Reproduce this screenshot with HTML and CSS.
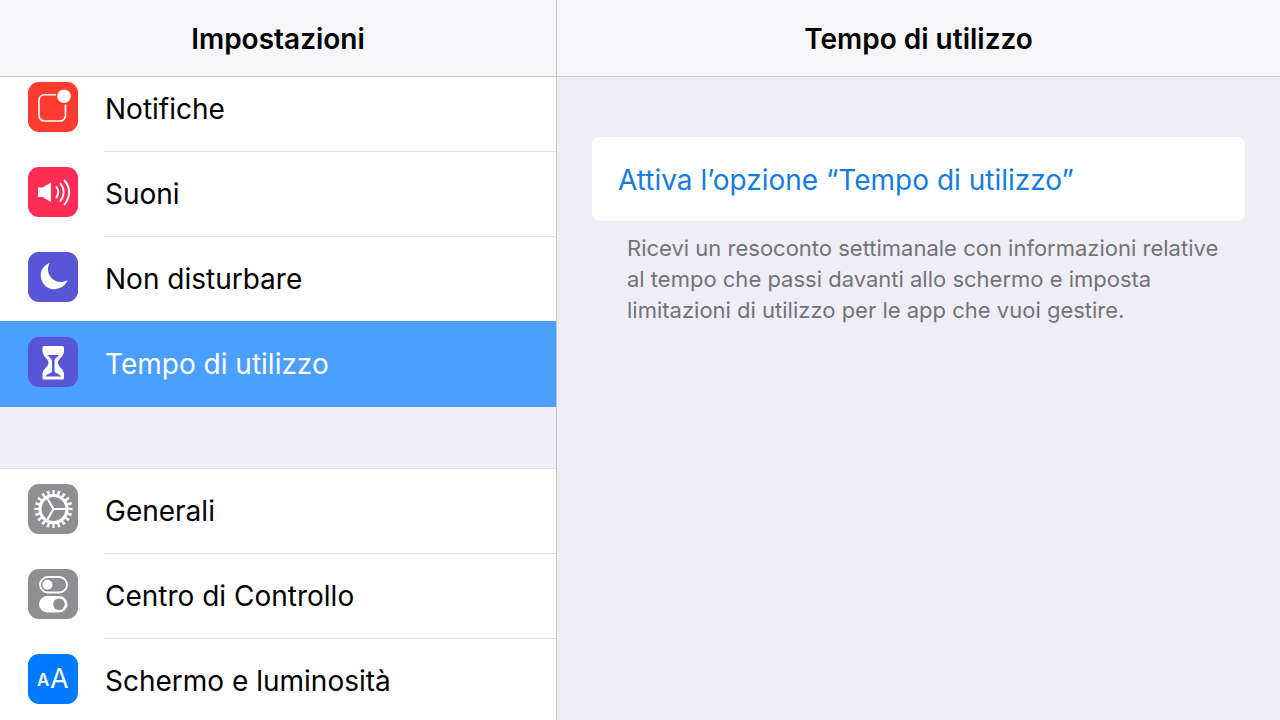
FILE: index.html
```html
<!DOCTYPE html>
<html lang="it">
<head>
<meta charset="utf-8">
<meta name="viewport" content="width=device-width, initial-scale=1">
<title>Impostazioni</title>
<link rel="stylesheet" href="styles.css">
</head>
<body>
<div class="app">
  <aside class="sidebar">
    <header class="bar"><h1 class="bar-title">Impostazioni</h1></header>
    <nav class="menu">
      <ul class="group group-scrolled">
        <li><a class="row" href="#notifiche">
          <svg class="icon red" viewBox="0 0 50 50" aria-hidden="true"><path d="M28 12.700H16.500a5.500 5.500 0 0 0-5.500 5.500V33.500a5.500 5.500 0 0 0 5.500 5.500H32a5.500 5.500 0 0 0 5.500-5.500V22.500" fill="none" stroke="#fff" stroke-width="1.600"/><circle cx="36" cy="14.200" r="6.800" fill="#fff"/></svg>
          <span class="label">Notifiche</span></a></li>
        <li><a class="row" href="#suoni">
          <svg class="icon pink" viewBox="0 0 50 50" aria-hidden="true"><path d="M10 20.500h4.500l8.500-5v19.500l-8.500-5H10z" fill="#fff"/><g fill="none" stroke="#fff" stroke-width="2" stroke-linecap="round"><path d="M28.500 20q3.600 5 0 10.500"/><path d="M32.500 16.500q6.400 8.500 0 17.500"/><path d="M36.500 13.500q9.500 11.500 0 24"/></g></svg>
          <span class="label">Suoni</span></a></li>
        <li><a class="row" href="#non-disturbare">
          <svg class="icon purple" viewBox="0 0 50 50" aria-hidden="true"><path d="M21.500 11C14.500 14 11.500 20 13.200 26.500C15 34.500 22 38.500 29 36.800C34.500 35.600 38 32.500 39.500 28C34 31.500 27.500 30.500 23.500 26C19.500 21.500 19 16.500 21.500 11z" fill="#fff"/></svg>
          <span class="label">Non disturbare</span></a></li>
        <li><a class="row selected" href="#tempo" aria-current="page">
          <svg class="icon purple" viewBox="0 0 50 50" aria-hidden="true"><path d="M16 9h18.500q1.500 0 1.500 1.500v3.500c0 6-6 7.500-6 11.700s6 6 6 11.800V41q0 1.500-1.500 1.500H16Q14.500 42.500 14.500 41v-3.500c0-5.800 6-7.600 6-11.800s-6-5.700-6-11.700v-3.500Q14.500 9 16 9z" fill="#fff"/><path d="M19.500 18H31c-1.500 2.500-4.500 3-4.500 6.500V34c0 2.500 5 2.500 6.500 5.500H17.500c1.500-3 6.500-3 6.500-5.500v-9.500c0-3.500-3-4-4.500-6.500z" fill="#5856d6"/></svg>
          <span class="label">Tempo di utilizzo</span></a></li>
      </ul>
      <ul class="group">
        <li><a class="row" href="#generali">
          <svg class="icon gray" viewBox="0 0 50 50" aria-hidden="true"><g fill="none" stroke="#fff"><circle cx="25.500" cy="25" r="13.500" stroke-width="3.200"/><circle cx="25.500" cy="25" r="16.800" stroke-width="4.500" pathLength="400" stroke-dasharray="9.200 10.800" stroke-dashoffset="4.600"/><path d="M25.500 25H39M25.500 25l-6.800-11.700M25.500 25l-6.800 11.700" stroke-width="2.200"/></g></svg>
          <span class="label">Generali</span></a></li>
        <li><a class="row" href="#centro-di-controllo">
          <svg class="icon gray" viewBox="0 0 50 50" aria-hidden="true"><rect x="12" y="8" width="27" height="15.500" rx="7.750" fill="none" stroke="#fff" stroke-width="1.800"/><circle cx="19.500" cy="15.750" r="5" fill="#fff"/><rect x="11" y="27" width="28.500" height="16.500" rx="8.250" fill="#fff"/><circle cx="31" cy="35.200" r="5.800" fill="#8e8e93"/></svg>
          <span class="label">Centro di Controllo</span></a></li>
        <li><a class="row" href="#schermo">
          <svg class="icon blue" viewBox="0 0 50 50" aria-hidden="true"><g fill="#fff"><text x="9" y="32" class="glyph-small">A</text><text x="22" y="34" class="glyph-large">A</text></g></svg>
          <span class="label">Schermo e luminosità</span></a></li>
      </ul>
    </nav>
  </aside>
  <main class="detail">
    <header class="bar"><h2 class="bar-title">Tempo di utilizzo</h2></header>
    <section class="content">
      <button class="action" type="button">Attiva l’opzione “Tempo di utilizzo”</button>
      <p class="note">Ricevi un resoconto settimanale con informazioni relative al tempo che passi davanti allo schermo e imposta limitazioni di utilizzo per le app che vuoi gestire.</p>
    </section>
  </main>
</div>
</body>
</html>
```

FILE: styles.css
```css
* { box-sizing: border-box; }
body {
  margin: 0;
  background: #efeef6;
  color: #000;
  font-family: Inter, "Liberation Sans", sans-serif;
}
.app {
  display: grid;
  grid-template-columns: 557fr 723fr;
  height: 100vh;
  overflow: hidden;
}
.sidebar {
  display: flex;
  flex-direction: column;
  min-width: 0;
  min-height: 0;
  border-right: 1px solid #c6c6ca;
}
.bar {
  display: flex;
  flex: none;
  align-items: center;
  justify-content: center;
  height: 77px;
  padding-top: 1px;
  background: #f6f6f9;
  border-bottom: 1px solid #cbcbcf;
}
.bar-title { margin: 0; font-size: 28px; line-height: 36px; font-weight: 600; }
.menu { flex: 1; min-height: 0; overflow: hidden; }
.group {
  margin: 0 0 61px;
  padding: 0;
  list-style: none;
  background: #fff;
  border-top: 1px solid #e0e0e4;
}
.group-scrolled { margin-top: -11px; }
.row {
  display: flex;
  align-items: flex-start;
  height: 85px;
  padding-left: 28px;
  color: inherit;
  text-decoration: none;
}
.icon { flex: none; width: 50px; height: 50px; margin: 15px 26px 0 0; border-radius: 11px; }
.label {
  display: flex;
  flex: 1;
  align-items: center;
  height: 85px;
  padding-left: 1px;
  font-size: 28px;
  line-height: 36px;
  border-bottom: 1px solid #e0e0e4;
  white-space: nowrap;
}
/* The highlight covers the separator of the row above. */
.selected {
  position: relative;
  height: 86px;
  margin-top: -1px;
  padding-top: 1px;
  background: #4a9fff;
  color: #fff;
}
.selected .label { border-bottom-color: transparent; }
.red { background: #ff3b30; }
.pink { background: #ff2d55; }
.purple { background: #5856d6; }
.gray { background: #8e8e93; }
.blue { background: #007aff; }
.glyph-small { font-size: 17px; font-weight: 600; }
.glyph-large { font-size: 27px; }
.detail { min-width: 0; }
.content { padding: 60px 35px; }
.action {
  display: block;
  width: 100%;
  height: 84px;
  padding: 2px 26px 0;
  border: 0;
  border-radius: 8px;
  background: #fff;
  color: #157ce0;
  font-family: inherit;
  font-size: 28px;
  line-height: 36px;
  text-align: left;
}
.note {
  margin: 12px 0 0;
  padding: 0 15px 0 35px;
  color: #737378;
  font-size: 22px;
  line-height: 31px;
}
```
